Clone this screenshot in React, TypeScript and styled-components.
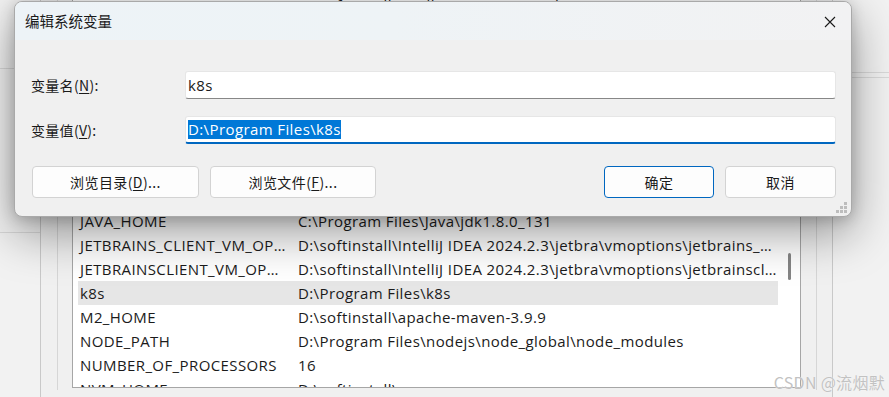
import React from "react";
import styled, { createGlobalStyle } from "styled-components";

const GlobalStyle = createGlobalStyle`
  html, body { margin: 0; padding: 0; }
  body {
    width: 889px;
    height: 397px;
    overflow: hidden;
    background: #f0f0f0;
    font-family: "Open Sans", "Noto Sans CJK SC", sans-serif;
    color: #1a1a1a;
  }
  * { box-sizing: border-box; }
`;

const LATIN = `"Open Sans", "Noto Sans CJK SC", sans-serif`;

const Screen = styled.div`
  position: relative;
  width: 889px;
  height: 397px;
  overflow: hidden;
  display: flex;
  background: #f1f1f1;
`;

const SidePane = styled.div<{ $w: number }>`
  width: ${(p) => p.$w}px;
  flex: ${(p) => (p.$w ? "none" : "1")};
  display: flex;
  flex-direction: column;
  background: #f2f2f2;
`;

const Spacer = styled.div<{ $h: number }>`
  height: ${(p) => p.$h}px;
  flex: none;
`;

const Rule = styled.div`
  height: 1px;
  background: #d9d9d9;
  flex: none;
`;

const BackWindow = styled.div`
  width: 793px;
  flex: none;
  height: 100%;
  border-left: 1px solid #c9c9c9;
  border-right: 1px solid #c9c9c9;
  padding: 0 15px 0 16px;
  background: #f0f0f0;
`;

const Panel = styled.div`
  height: 100%;
  border-left: 1px solid #d6d6d6;
  border-right: 1px solid #d6d6d6;
  padding: 0 15px 0 14px;
  background: #f0f0f0;
`;

const ListBox = styled.div`
  margin-top: -7px;
  height: 395px;
  display: flex;
  background: #ffffff;
  border-left: 1px solid #a6a6a6;
  border-right: 1px solid #a6a6a6;
  border-bottom: 1px solid #a6a6a6;
  overflow: hidden;
`;

const Rows = styled.div`
  width: 700px;
  margin-left: 5px;
  display: flex;
  flex-direction: column;
`;

const Row = styled.div<{ $selected?: boolean }>`
  height: 24px;
  flex: none;
  display: flex;
  align-items: center;
  background: ${(p) => (p.$selected ? "#e6e6e6" : "transparent")};
  font-family: ${LATIN};
  font-size: 15px;
  letter-spacing: 0.4px;
  color: #1b1b1b;
  white-space: nowrap;
`;

const NameCell = styled.div`
  width: 220px;
  padding-left: 2px;
  overflow: hidden;
  flex: none;
`;

const ValueCell = styled.div`
  flex: 1;
  overflow: hidden;
`;

const ScrollTrack = styled.div`
  flex: 1;
  display: flex;
  justify-content: center;
`;

const Thumb = styled.div`
  width: 3px;
  height: 27px;
  margin-top: 260px;
  border-radius: 2px;
  background: #858585;
`;

/* ---------- Dialog ---------- */

const Dialog = styled.div`
  position: absolute;
  left: 14px;
  top: 1px;
  width: 838px;
  height: 216px;
  border: 1px solid #a9a9a9;
  border-radius: 8px;
  background: #f0f0f0;
  overflow: hidden;
  box-shadow: 0 16px 48px rgba(0, 0, 0, 0.4), 0 2px 14px rgba(0, 0, 0, 0.18);
  display: flex;
  flex-direction: column;
`;

const TitleBar = styled.div`
  height: 38px;
  flex: none;
  display: flex;
  align-items: center;
  justify-content: space-between;
  padding: 0 11px 0 10px;
  background: linear-gradient(90deg, #edf3f7 0%, #eef3f6 45%, #f2f2f3 100%);
`;

const Title = styled.div`
  font-family: "Noto Sans CJK SC", sans-serif;
  font-size: 14.5px;
  color: #1a1a1a;
  margin-top: -2px;
`;

const CloseButton = styled.div`
  width: 20px;
  height: 20px;
  display: flex;
  align-items: center;
  justify-content: center;
  margin-top: 1px;
`;

const Body = styled.div`
  flex: 1;
  position: relative;
  padding: 31px 15px 0 16px;
  display: flex;
  flex-direction: column;
`;

const FieldRow = styled.div<{ $gap?: number }>`
  display: flex;
  align-items: center;
  height: 28px;
  margin-bottom: ${(p) => p.$gap ?? 0}px;
`;

const Label = styled.div`
  width: 154px;
  flex: none;
  font-family: "Noto Sans CJK SC", sans-serif;
  font-size: 14px;
  letter-spacing: 0.3px;
  color: #1a1a1a;
`;

const AccessKey = styled.span`
  text-decoration: underline;
  text-underline-offset: 2px;
`;

const Input = styled.div<{ $focused?: boolean }>`
  flex: 1;
  height: 28px;
  background: #ffffff;
  border: 1px solid #e6e6e6;
  border-bottom: ${(p) => (p.$focused ? "2px solid #0067c0" : "1px solid #878787")};
  border-radius: 3px;
  display: flex;
  align-items: center;
  padding-left: 2px;
  font-family: ${LATIN};
  font-size: 15px;
  letter-spacing: 0.4px;
  color: #1a1a1a;
`;

const Selection = styled.span`
  background: #0078d7;
  color: #ffffff;
  line-height: 19px;
`;

const ButtonRow = styled.div`
  display: flex;
  margin-top: 22px;
  padding-left: 1px;
  gap: 11px;
`;

const Button = styled.div<{ $w: number; $primary?: boolean; $push?: boolean }>`
  width: ${(p) => p.$w}px;
  height: 32px;
  margin-left: ${(p) => (p.$push ? "auto" : "0")};
  background: #fdfdfd;
  border: 1px solid ${(p) => (p.$primary ? "#0067c0" : "#d3d3d3")};
  border-radius: 4px;
  display: flex;
  align-items: center;
  justify-content: center;
  font-family: "Noto Sans CJK SC", sans-serif;
  font-size: 14px;
  letter-spacing: 0.4px;
  color: #1a1a1a;
`;

const Grip = styled.svg`
  position: absolute;
  right: 3px;
  bottom: 2px;
`;

const Watermark = styled.div`
  position: absolute;
  right: 4px;
  bottom: 3px;
  font-family: "Noto Sans CJK SC", sans-serif;
  font-size: 16px;
  color: #c2c2c2;
  text-shadow: 0 0 1px #ffffff;
  letter-spacing: 0.3px;
`;

type Item = { name: string; value: string; selected?: boolean };

const items: Item[] = [
  { name: "IDEA", value: "D:\\softinstall\\IntelliJ IDEA 2024.2.3\\bin" },
  { name: "ComSpec", value: "C:\\Windows\\system32\\cmd.exe" },
  { name: "DriverData", value: "C:\\Windows\\System32\\Drivers\\DriverData" },
  { name: "GOPATH", value: "D:\\softinstall\\go" },
  { name: "GRADLE_HOME", value: "D:\\softinstall\\gradle-8.5" },
  { name: "GRADLE_USER_HOME", value: "D:\\softinstall\\gradle_repo" },
  { name: "HADOOP_HOME", value: "D:\\softinstall\\hadoop-3.3.6" },
  { name: "HOME", value: "C:\\Users\\Administrator" },
  { name: "IDEA_VM_OPTIONS", value: "D:\\softinstall\\IntelliJ IDEA 2024.2.3\\jetbra" },
  { name: "JAVA_HOME", value: "C:\\Program Files\\Java\\jdk1.8.0_131" },
  { name: "JETBRAINS_CLIENT_VM_OP…", value: "D:\\softinstall\\IntelliJ IDEA 2024.2.3\\jetbra\\vmoptions\\jetbrains_…" },
  { name: "JETBRAINSCLIENT_VM_OP…", value: "D:\\softinstall\\IntelliJ IDEA 2024.2.3\\jetbra\\vmoptions\\jetbrainscl…" },
  { name: "k8s", value: "D:\\Program Files\\k8s", selected: true },
  { name: "M2_HOME", value: "D:\\softinstall\\apache-maven-3.9.9" },
  { name: "NODE_PATH", value: "D:\\Program Files\\nodejs\\node_global\\node_modules" },
  { name: "NUMBER_OF_PROCESSORS", value: "16" },
  { name: "NVM_HOME", value: "D:\\softinstall\\nvm" },
];

const CloseIcon = () => (
  <svg width="12" height="12" viewBox="0 0 12 12">
    <path d="M1 1 L11 11 M11 1 L1 11" stroke="#1a1a1a" strokeWidth="1.1" fill="none" />
  </svg>
);

const GripIcon = () => (
  <Grip width="12" height="12" viewBox="0 0 12 12">
    <g fill="#bdbdbd">
      <rect x="8" y="0" width="3" height="3" />
      <rect x="4" y="4" width="3" height="3" />
      <rect x="8" y="4" width="3" height="3" />
      <rect x="0" y="8" width="3" height="3" />
      <rect x="4" y="8" width="3" height="3" />
      <rect x="8" y="8" width="3" height="3" />
    </g>
  </Grip>
);

export default function App() {
  return (
    <>
      <GlobalStyle />
      <Screen>
        <SidePane $w={40}>
          <Spacer $h={68} />
          <Rule />
          <Spacer $h={163} />
          <Rule />
        </SidePane>
        <BackWindow>
          <Panel>
            <ListBox>
              <Rows>
                {items.map((it, i) => (
                  <Row key={i} $selected={it.selected}>
                    <NameCell>{it.name}</NameCell>
                    <ValueCell>{it.value}</ValueCell>
                  </Row>
                ))}
              </Rows>
              <ScrollTrack>
                <Thumb />
              </ScrollTrack>
            </ListBox>
          </Panel>
        </BackWindow>
        <SidePane $w={0}>
          <Spacer $h={72} />
          <Rule />
          <Spacer $h={4} />
          <Rule />
        </SidePane>

        <Dialog>
          <TitleBar>
            <Title>编辑系统变量</Title>
            <CloseButton>
              <CloseIcon />
            </CloseButton>
          </TitleBar>
          <Body>
            <FieldRow $gap={17}>
              <Label>
                变量名(<AccessKey>N</AccessKey>):
              </Label>
              <Input>k8s</Input>
            </FieldRow>
            <FieldRow>
              <Label>
                变量值(<AccessKey>V</AccessKey>):
              </Label>
              <Input $focused>
                <Selection>D:\Program Files\k8s</Selection>
              </Input>
            </FieldRow>
            <ButtonRow>
              <Button $w={167}>
                浏览目录(<AccessKey>D</AccessKey>)...
              </Button>
              <Button $w={166}>
                浏览文件(<AccessKey>F</AccessKey>)...
              </Button>
              <Button $w={110} $primary $push>
                确定
              </Button>
              <Button $w={111}>取消</Button>
            </ButtonRow>
            <GripIcon />
          </Body>
        </Dialog>

        <Watermark>CSDN @流烟默</Watermark>
      </Screen>
    </>
  );
}
